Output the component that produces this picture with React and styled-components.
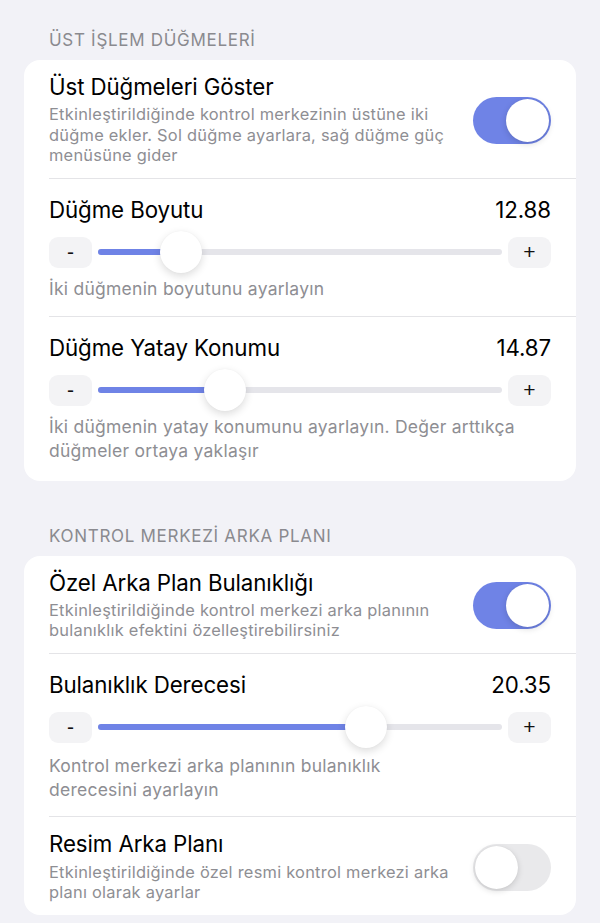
import React from "react";
import styled, { createGlobalStyle } from "styled-components";

const Global = createGlobalStyle`
  html, body { margin: 0; padding: 0; background: #f2f2f7; }
  body { font-family: Inter, "Noto Sans", sans-serif; -webkit-font-smoothing: antialiased; }
  * { box-sizing: border-box; }
`;

const ACCENT = "#6f83e6";

const Page = styled.div`
  width: 600px;
  min-height: 923px;
  padding: 30px 24px 8px;
  display: flex;
  flex-direction: column;
`;

const SectionHeader = styled.div`
  padding-left: 25px;
  font-size: 17px;
  line-height: 20px;
  color: #8a8a8f;
  letter-spacing: 0.7px;
  margin-bottom: 10px;
`;

const Card = styled.div`
  background: #fff;
  border-radius: 16px;
  padding-left: 25px;
  margin-bottom: ${(p) => p.$mb || 0}px;
`;

const Row = styled.div`
  display: flex;
  align-items: center;
  gap: 16px;
  padding: ${(p) => p.$pt}px 25px ${(p) => p.$pb}px 0;
  border-bottom: ${(p) => (p.$last ? "none" : "1px solid #e4e4e7")};
`;

const SliderBlock = styled.div`
  padding: 19px 25px ${(p) => p.$pb}px 0;
  border-bottom: ${(p) => (p.$last ? "none" : "1px solid #e4e4e7")};
`;

const TextCol = styled.div`
  flex: 1;
  min-width: 0;
`;

const Title = styled.div`
  font-size: 22.3px;
  line-height: 24px;
  color: #000;
  letter-spacing: -0.1px;
`;

const TitleLine = styled(Title)`
  display: flex;
  justify-content: space-between;
  align-items: center;
`;

const Desc = styled.div`
  font-size: ${(p) => p.$fs}px;
  letter-spacing: 0.25px;
  line-height: ${(p) => p.$lh}px;
  color: #8e8e93;
  margin-top: ${(p) => p.$mt}px;
  max-width: ${(p) => p.$mw || "none"};
`;

const SwitchTrack = styled.div`
  flex: none;
  width: 78px;
  height: 47px;
  border-radius: 24px;
  background: ${(p) => (p.$on ? ACCENT : "#e9e9eb")};
  position: relative;
`;

const SwitchKnob = styled.div`
  position: absolute;
  top: 2px;
  left: ${(p) => (p.$on ? 33 : 2)}px;
  width: 43px;
  height: 43px;
  border-radius: 50%;
  background: #fff;
  box-shadow: 0 2px 6px rgba(0, 0, 0, 0.15), 0 0 1px rgba(0, 0, 0, 0.08);
`;

const SliderRow = styled.div`
  display: flex;
  align-items: center;
  gap: 6px;
  margin-top: 15px;
  height: 31px;
`;

const StepButton = styled.div`
  flex: none;
  width: 43px;
  height: 31px;
  border-radius: 9px;
  background: #f3f3f5;
  display: flex;
  align-items: center;
  justify-content: center;
  font-size: 21px;
  color: #111;
  font-family: "Liberation Sans", Arial, sans-serif;
`;

const Track = styled.div`
  flex: 1;
  height: 6px;
  border-radius: 3px;
  background: #e5e5ea;
  position: relative;
`;

const Fill = styled.div`
  position: absolute;
  left: 0;
  top: 0;
  bottom: 0;
  border-radius: 3px;
  background: ${ACCENT};
`;

const Thumb = styled.div`
  position: absolute;
  top: 50%;
  width: 42px;
  height: 42px;
  margin-left: -21px;
  margin-top: -21px;
  border-radius: 50%;
  background: #fff;
  box-shadow: 0 3px 9px rgba(0, 0, 0, 0.14), 0 0 1px rgba(0, 0, 0, 0.06);
`;

function Toggle({ on }) {
  return (
    <SwitchTrack $on={on}>
      <SwitchKnob $on={on} />
    </SwitchTrack>
  );
}

function ToggleRow({ title, desc, on, last, pt = 15, pb = 12, mt = 5 }) {
  return (
    <Row $pt={pt} $pb={pb} $last={last}>
      <TextCol>
        <Title>{title}</Title>
        <Desc $fs={16.4} $lh={20.5} $mt={mt}>
          {desc}
        </Desc>
      </TextCol>
      <Toggle on={on} />
    </Row>
  );
}

function SliderSetting({ title, value, pct, desc, last, descWidth, pb = 15, mt = 9 }) {
  return (
    <SliderBlock $pb={pb} $last={last}>
      <TitleLine>
        <span>{title}</span>
        <span>{value}</span>
      </TitleLine>
      <SliderRow>
        <StepButton>-</StepButton>
        <Track>
          <Fill style={{ width: `${pct}%` }} />
          <Thumb style={{ left: `${pct}%` }} />
        </Track>
        <StepButton>+</StepButton>
      </SliderRow>
      <Desc $fs={17.5} $lh={24} $mt={mt} $mw={descWidth}>
        {desc}
      </Desc>
    </SliderBlock>
  );
}

export default function App() {
  return (
    <>
      <Global />
      <Page>
        <SectionHeader>ÜST İŞLEM DÜĞMELERİ</SectionHeader>
        <Card $mb={45}>
          <ToggleRow
            title="Üst Düğmeleri Göster"
            desc="Etkinleştirildiğinde kontrol merkezinin üstüne iki düğme ekler. Sol düğme ayarlara, sağ düğme güç menüsüne gider"
            on
          />
          <SliderSetting
            title="Düğme Boyutu"
            value="12.88"
            pct={20.5}
            desc="İki düğmenin boyutunu ayarlayın"
          />
          <SliderSetting
            title="Düğme Yatay Konumu"
            value="14.87"
            pct={31.4}
            desc="İki düğmenin yatay konumunu ayarlayın. Değer arttıkça düğmeler ortaya yaklaşır"
            last
            pb={18}
          />
        </Card>
        <SectionHeader>KONTROL MERKEZİ ARKA PLANI</SectionHeader>
        <Card>
          <ToggleRow
            title="Özel Arka Plan Bulanıklığı"
            desc="Etkinleştirildiğinde kontrol merkezi arka planının bulanıklık efektini özelleştirebilirsiniz"
            on
          />
          <SliderSetting
            title="Bulanıklık Derecesi"
            value="20.35"
            pct={66.3}
            desc="Kontrol merkezi arka planının bulanıklık derecesini ayarlayın"
            descWidth="400px"
            mt={11}
            pb={14}
          />
          <ToggleRow
            title="Resim Arka Planı"
            desc="Etkinleştirildiğinde özel resmi kontrol merkezi arka planı olarak ayarlar"
            last
            mt={6}
            pb={12}
          />
        </Card>
      </Page>
    </>
  );
}
